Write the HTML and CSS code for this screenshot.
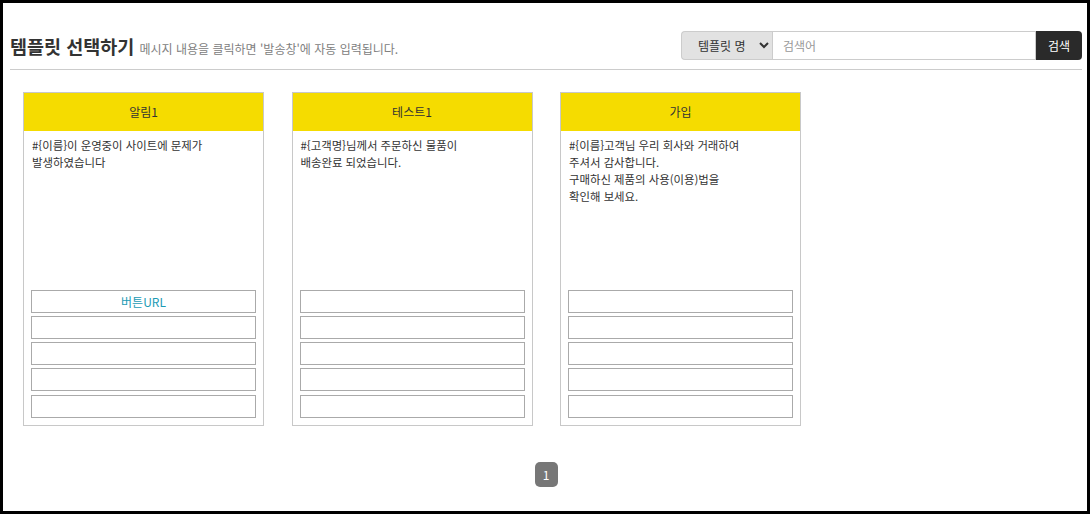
FILE: index.html
```html
<!DOCTYPE html>
<html lang="ko">
<head>
    <meta charset="UTF-8">
    <title>템플릿 선택하기</title>
    <link rel="stylesheet" href="styles.css">
</head>
<body>
<div class="wrap">

    <div class="top">
        <h2>템플릿 선택하기 <small>메시지 내용을 클릭하면 '발송창'에 자동 입력됩니다.</small></h2>
        <form class="search">
            <select>
                <option>템플릿 명</option>
            </select>
            <input type="text" placeholder="검색어">
            <button type="button">검색</button>
        </form>
    </div>
    <hr>

    <!-- 템플릿 목록 -->
    <ul class="tpl-list">
        <li class="tpl">
            <div class="tpl-title">알림1</div>
            <div class="tpl-body">
                <p class="tpl-msg">#{이름}이 운영중이 사이트에 문제가<br>발생하였습니다</p>
                <div class="tpl-btn">버튼URL</div>
                <div class="tpl-btn"></div>
                <div class="tpl-btn"></div>
                <div class="tpl-btn"></div>
                <div class="tpl-btn last"></div>
            </div>
        </li>
        <li class="tpl">
            <div class="tpl-title">테스트1</div>
            <div class="tpl-body">
                <p class="tpl-msg">#{고객명}님께서 주문하신 물품이<br>배송완료 되었습니다.</p>
                <div class="tpl-btn"></div>
                <div class="tpl-btn"></div>
                <div class="tpl-btn"></div>
                <div class="tpl-btn"></div>
                <div class="tpl-btn last"></div>
            </div>
        </li>
        <li class="tpl">
            <div class="tpl-title">가입</div>
            <div class="tpl-body">
                <p class="tpl-msg">#{이름}고객님 우리 회사와 거래하여<br>주셔서 감사합니다.<br>구매하신 제품의 사용(이용)법을<br>확인해 보세요.</p>
                <div class="tpl-btn"></div>
                <div class="tpl-btn"></div>
                <div class="tpl-btn"></div>
                <div class="tpl-btn"></div>
                <div class="tpl-btn last"></div>
            </div>
        </li>
    </ul>

    <div class="paging">
        <a href="#">1</a>
    </div>

</div>
</body>
</html>
```

FILE: styles.css
```css
body {
    margin: 0;
    font-family: "Noto Sans CJK KR", "Noto Sans", sans-serif;
    font-size: 12px;
    color: #333;
    background-color: #fff;
}
.wrap {
    height: 514px;
    box-sizing: border-box;
    border: 3px solid #000;
    padding: 0 5px 0 7px;
}
.top {
    display: flex;
    align-items: center;
    justify-content: space-between;
    padding-top: 28px;
    height: 29px;
}
.top h2 {
    margin: 0;
    font-size: 18.5px;
    font-weight: bold;
    color: #333;
}
.top h2 small {
    font-size: 12px;
    font-weight: normal;
    color: #808080;
}
.search {
    display: flex;
    height: 29px;
}
.search select {
    width: 91px;
    height: 29px;
    border: 1px solid #ccc;
    border-right: none;
    border-radius: 4px 0 0 4px;
    background-color: #e2e2e2;
    font-family: inherit;
    font-size: 12px;
    color: #333;
    padding: 0 6px 0 12px;
}
.search input {
    width: 264px;
    height: 29px;
    box-sizing: border-box;
    border: 1px solid #ccc;
    font-family: inherit;
    font-size: 12px;
    padding: 0 10px;
    outline: none;
}
.search input::placeholder {
    color: #999;
}
.search button {
    width: 46px;
    height: 29px;
    border: none;
    border-radius: 0 4px 4px 0;
    background-color: #2a2a2a;
    color: white;
    font-family: inherit;
    font-size: 12px;
    cursor: pointer;
}
hr {
    margin: 9px 0 0;
    border: none;
    border-top: 1px solid #ccc;
}
.tpl-list {
    list-style-type: none;
    margin: 22px 0 0;
    padding: 0 0 0 13px;
    display: flex;
    gap: 27.5px;
}
.tpl {
    width: 241px;
    height: 334px;
    box-sizing: border-box;
    border: 1px solid #c8c8c8;
    cursor: pointer;
}
.tpl-title {
    height: 38px;
    line-height: 38px;
    text-align: center;
    background-color: #f5dc00;
    color: #333;
}
.tpl-body {
    padding: 6px 7px 0;
}
.tpl-msg {
    margin: 0 0 0 1px;
    height: 153px;
    font-size: 11.4px;
    line-height: 17px;
}
.tpl-btn {
    height: 23px;
    box-sizing: border-box;
    border: 1px solid #aaa;
    margin-bottom: 3px;
    line-height: 21px;
    text-align: center;
    color: #1c9bb5;
}
.tpl-btn.last {
    margin-top: 4px;
}
.paging {
    margin-top: 36px;
    text-align: center;
}
.paging a {
    display: inline-block;
    width: 23px;
    height: 25px;
    line-height: 25px;
    border-radius: 5px;
    background-color: #777;
    color: white;
    text-decoration: none;
}
```
